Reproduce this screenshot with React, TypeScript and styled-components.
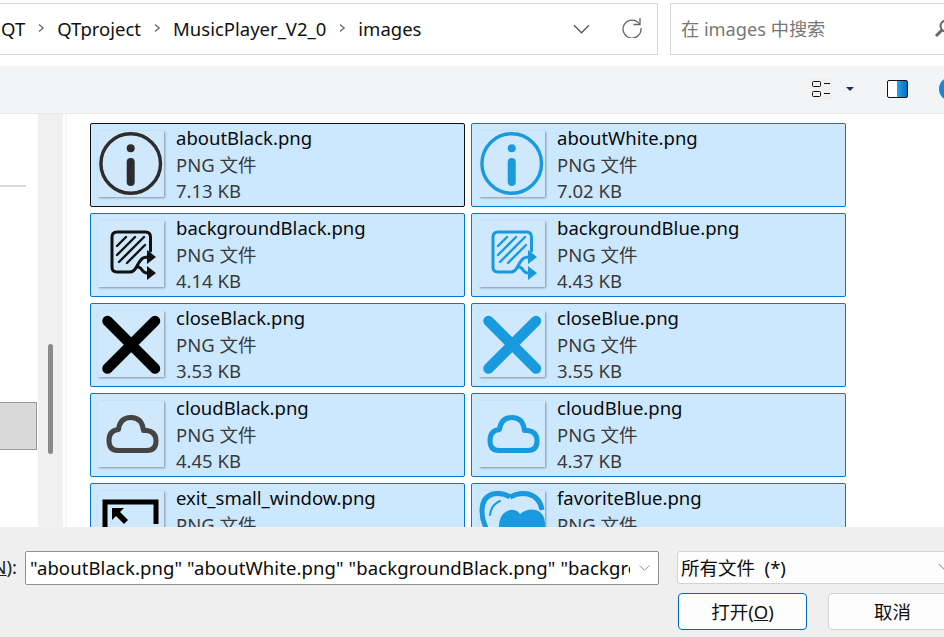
import styled, { createGlobalStyle } from "styled-components";

const Global = createGlobalStyle`
  html, body { margin: 0; padding: 0; background: #fff; overflow: hidden; }
  * { box-sizing: border-box; }
`;

const Main = styled.div`
  width: 944px;
  height: 637px;
  display: flex;
  flex-direction: column;
  overflow: hidden;
  font-family: "Noto Sans", "Noto Sans CJK SC", sans-serif;
  font-size: 18.5px;
  color: #111;
`;
const TopBar = styled.div`
  height: 66px;
  flex: none;
  display: flex;
  gap: 12px;
  padding-top: 3px;
  background: #fff;
`;
const AddressBox = styled.div`
  width: 658px;
  height: 52px;
  flex: none;
  display: flex;
  align-items: center;
  border: 1px solid #d9d9d9;
  border-left: none;
  padding: 0 15px 2px 1px;
`;
const Crumb = styled.span`
  color: #111;
  white-space: nowrap;
`;
const CrumbSep = styled.svg`
  width: 32px;
  height: 12px;
  flex: none;
`;
const AddressTools = styled.div`
  margin-left: auto;
  display: flex;
  align-items: center;
  gap: 32px;
`;
const SearchBox = styled.div`
  width: 300px;
  height: 52px;
  flex: none;
  display: flex;
  align-items: center;
  padding: 0 0 2px 10px;
  border: 1px solid #d9d9d9;
  font-size: 18.2px;
  color: #777;
  white-space: nowrap;
`;
const SearchGlyph = styled.svg`
  width: 20px;
  height: 20px;
  margin-left: 109px;
  flex: none;
`;
const Toolbar = styled.div`
  height: 48px;
  flex: none;
  display: flex;
  align-items: center;
  justify-content: flex-end;
  background: #f3f4f6;
  border-bottom: 1px solid #eaeaea;
  padding-bottom: 1px;
`;
const ViewButton = styled.div`
  width: 22px;
  height: 22px;
  display: flex;
  align-items: center;
  justify-content: center;
  background: #f0f0f0;
`;
const Caret = styled.div`
  width: 0;
  height: 0;
  margin-left: 14px;
  border-left: 4px solid transparent;
  border-right: 4px solid transparent;
  border-top: 4px solid #1d2f55;
`;
const PaneIcon = styled.div`
  width: 21px;
  height: 18px;
  margin-left: 33px;
  border: 1px solid #111;
  border-radius: 2px;
  background: linear-gradient(90deg, #fff 0 50%, #29a0ea 50%, #0a6cc4 100%);
`;
const HelpDot = styled.div`
  width: 24px;
  height: 24px;
  flex: none;
  margin-left: 31px;
  margin-right: -19px;
  border-radius: 50%;
  background: #1a86d8;
`;
const Body = styled.div`
  flex: 1;
  min-height: 0;
  display: flex;
  overflow: hidden;
`;
const NavPane = styled.div`
  width: 38px;
  flex: none;
  background: #fff;
  padding-top: 71px;
`;
const NavRule = styled.div`
  width: 26px;
  height: 2px;
  background: #dadada;
`;
const NavSelected = styled.div`
  width: 37px;
  height: 48px;
  margin-top: 215px;
  background: #d9d9d9;
  border: 1px solid #999;
  border-left: none;
`;
const ScrollTrack = styled.div`
  width: 25px;
  flex: none;
  background: #f0f0f0;
  padding: 230px 0 0 10px;
`;
const ScrollThumb = styled.div`
  width: 5px;
  height: 110px;
  border-radius: 3px;
  background: #8a8a8a;
`;
const Edge = styled.div`
  width: 2px;
  flex: none;
  margin-left: 2px;
  background: #f7f7f7;
`;
const Files = styled.div`
  flex: 1;
  display: grid;
  grid-template-columns: 375px 375px;
  grid-auto-rows: 84px;
  gap: 6px;
  align-content: start;
  padding: 9px 0 0 23px;
  background: #fff;
`;
const Card = styled.div<{ $focused?: boolean }>`
  display: flex;
  background: #cce8ff;
  border: 1px solid ${(p) => (p.$focused ? "#111" : "#0078d4")};
  border-radius: 2px;
  padding: 7px 0 0 7px;
`;
const Thumb = styled.div`
  width: 66px;
  height: 66px;
  flex: none;
  background: #cfe8fc;
  box-shadow: 1px 1px 2px rgba(70, 80, 90, 0.55);
`;
const ThumbArt = styled.svg`
  display: block;
  width: 66px;
  height: 66px;
`;
const CardText = styled.div`
  margin-left: 12px;
  margin-top: -6px;
  line-height: 26px;
  white-space: nowrap;
`;
const FileName = styled.div`
  margin-bottom: 1px;
  color: #0a0a0a;
`;
const FileMeta = styled.div`
  color: #3a3a3a;
`;
const Footer = styled.div`
  height: 110px;
  flex: none;
  background: #efefef;
  padding-top: 24px;
`;
const FormRow = styled.div`
  display: flex;
  align-items: flex-start;
`;
const NameLabel = styled.div`
  width: 25px;
  height: 33px;
  flex: none;
  display: flex;
  justify-content: flex-end;
  align-items: center;
  overflow: hidden;
  padding: 0 8px 2px 0;
  white-space: nowrap;
  color: #222;
`;
const Under = styled.span`
  text-decoration: underline;
`;
const NameInput = styled.div`
  width: 634px;
  height: 34px;
  flex: none;
  display: flex;
  align-items: center;
  background: #fff;
  border: 1px solid #8f8f8f;
  border-radius: 2px;
  padding: 0 8px 2px 4px;
`;
const InputText = styled.div`
  flex: 1;
  min-width: 0;
  margin-right: 9px;
  overflow: hidden;
  white-space: nowrap;
  letter-spacing: 0.1px;
  color: #0a0a0a;
`;
const TypeSelect = styled.div`
  width: 278px;
  height: 33px;
  flex: none;
  display: flex;
  align-items: center;
  justify-content: space-between;
  margin-left: 18px;
  padding: 0 3px 2px 3px;
  background: #fdfdfd;
  border: 1px solid #d3d3d3;
  border-radius: 3px 0 0 3px;
  white-space: nowrap;
  color: #0a0a0a;
`;
const Actions = styled.div`
  display: flex;
  gap: 21px;
  margin-top: 8px;
  margin-left: 678px;
`;
const DialogButton = styled.button<{ $primary?: boolean }>`
  width: 129px;
  height: 37px;
  flex: none;
  padding: 0 0 2px;
  font: inherit;
  color: #111;
  background: #fdfdfd;
  border: 1px solid ${(p) => (p.$primary ? "#0067c0" : "#d3d3d3")};
  border-radius: 4px;
`;

const Chevron = ({ size, color }: { size: number; color: string }) => (
  <svg width={size} height={size} viewBox="0 0 16 16" fill="none">
    <path d="M1 5l7 7 7-7" stroke={color} strokeWidth="1.2" />
  </svg>
);

const Sep = () => (
  <CrumbSep viewBox="0 0 32 12">
    <path d="M14 2.5l4 3.5-4 3.5" fill="none" stroke="#777" strokeWidth="1.6" />
  </CrumbSep>
);

const BLUE = "#1a9ade";

const AboutArt = ({ color }: { color: string }) => (
  <ThumbArt viewBox="0 0 66 66">
    <circle cx="32.7" cy="32.5" r="29.8" fill="none" stroke={color} strokeWidth="3.4" />
    <circle cx="32.7" cy="17.3" r="4" fill={color} />
    <path d="M32.7 31v20" stroke={color} strokeWidth="8" strokeLinecap="round" />
  </ThumbArt>
);

const BackgroundArt = ({ color }: { color: string }) => (
  <ThumbArt viewBox="0 0 66 66">
    <g fill="none" stroke={color} strokeWidth="3" strokeLinecap="round" strokeLinejoin="round">
      <path d="M52.5 30V16q0-5-5-5H19q-5 0-5 5v30q0 5 5 5h13q4 0 7-6t6-8q2-1 8-1" />
      <path d="M40 46q2 0 4 3t5 3h6" />
      <path d="M19 25l9-9M19 34l18-18M21 41l25-25M29 42l18-18" strokeWidth="2.4" />
    </g>
    <path d="M49 29l9 7-9 7zM49 45l9 7-9 7z" fill={color} />
  </ThumbArt>
);

const CloseArt = ({ color }: { color: string }) => (
  <ThumbArt viewBox="0 0 66 66">
    <path d="M9.5 10l47.5 47.5M57 10L9.5 57.5" stroke={color} strokeWidth="10.5" strokeLinecap="round" />
  </ThumbArt>
);

const CloudArt = ({ color }: { color: string }) => (
  <ThumbArt viewBox="0 0 66 66">
    <path
      d="M20 49.5h29q9 0 9-9.5t-9.500-10.500h-3Q44 16.500 33 16.500 22 16.500 20.500 28.500 11 29.500 11 39.500T20 49.500z"
      fill="none"
      stroke={color}
      strokeWidth="5"
      strokeLinejoin="round"
    />
  </ThumbArt>
);

const ExitArt = () => (
  <ThumbArt viewBox="0 0 66 66">
    <path d="M7 42V11h51v22" fill="none" stroke="#000" strokeWidth="5" />
    <path d="M14 17h12l-4 4 8 8-4 4-8-8-4 4z" fill="#000" />
    <path d="M7 42v10M36 40h22" fill="none" stroke="#777" strokeWidth="3" />
  </ThumbArt>
);

const FavoriteArt = () => (
  <ThumbArt viewBox="0 0 66 66">
    <path
      d="M31 6Q23 1 14 3 3 6 3 20q0 12 8 24M31 6q9-5 18-3 12 3 14 16"
      fill="none"
      stroke={BLUE}
      strokeWidth="5"
    />
    <path d="M21 10q-9 4-10 14" fill="none" stroke={BLUE} strokeWidth="2" strokeLinecap="round" />
    <path d="M41 23q7-6 16-4 9 3 9 14v33H20V36q0-14 11-17 6-1 10 4z" fill={BLUE} />
  </ThumbArt>
);

const files = [
  { name: "aboutBlack.png", size: "7.13 KB", art: <AboutArt color="#2c2c2c" />, focused: true },
  { name: "aboutWhite.png", size: "7.02 KB", art: <AboutArt color={BLUE} /> },
  { name: "backgroundBlack.png", size: "4.14 KB", art: <BackgroundArt color="#111" /> },
  { name: "backgroundBlue.png", size: "4.43 KB", art: <BackgroundArt color={BLUE} /> },
  { name: "closeBlack.png", size: "3.53 KB", art: <CloseArt color="#000" /> },
  { name: "closeBlue.png", size: "3.55 KB", art: <CloseArt color={BLUE} /> },
  { name: "cloudBlack.png", size: "4.45 KB", art: <CloudArt color="#444" /> },
  { name: "cloudBlue.png", size: "4.37 KB", art: <CloudArt color={BLUE} /> },
  { name: "exit_small_window.png", size: "4.02 KB", art: <ExitArt /> },
  { name: "favoriteBlue.png", size: "6.21 KB", art: <FavoriteArt /> },
];

const App = () => {
  return (
    <Main>
      <Global />
      <TopBar>
        <AddressBox>
          <Crumb>QT</Crumb>
          <Sep />
          <Crumb>QTproject</Crumb>
          <Sep />
          <Crumb>MusicPlayer_V2_0</Crumb>
          <Sep />
          <Crumb>images</Crumb>
          <AddressTools>
            <Chevron size={17} color="#555" />
            <svg width="20" height="20" viewBox="0 0 20 20" fill="none">
              <path d="M17.500 6A9 9 0 1 0 19 10" stroke="#666" strokeWidth="1.3" />
              <path d="M18 0v6.500h-6.500" stroke="#666" strokeWidth="1.3" />
            </svg>
          </AddressTools>
        </AddressBox>
        <SearchBox>
          在 images 中搜索
          <SearchGlyph viewBox="0 0 20 20">
            <circle cx="12" cy="8" r="5.500" fill="none" stroke="#666" strokeWidth="2" />
            <path d="M8 12l-6 6" stroke="#666" strokeWidth="3" />
          </SearchGlyph>
        </SearchBox>
      </TopBar>
      <Toolbar>
        <ViewButton>
          <svg width="20" height="18" viewBox="0 0 20 18" fill="none">
            <rect x="1.500" y="1.500" width="8" height="5" rx="1" stroke="#111" />
            <rect x="1.500" y="11.500" width="8" height="5" rx="1" stroke="#111" />
            <path d="M13 3.500h6M13 13.500h6" stroke="#111" />
          </svg>
        </ViewButton>
        <Caret />
        <PaneIcon />
        <HelpDot />
      </Toolbar>
      <Body>
        <NavPane>
          <NavRule />
          <NavSelected />
        </NavPane>
        <ScrollTrack>
          <ScrollThumb />
        </ScrollTrack>
        <Edge />
        <Files>
          {files.map((f) => (
            <Card key={f.name} $focused={f.focused}>
              <Thumb>{f.art}</Thumb>
              <CardText>
                <FileName>{f.name}</FileName>
                <FileMeta>PNG 文件</FileMeta>
                <FileMeta>{f.size}</FileMeta>
              </CardText>
            </Card>
          ))}
        </Files>
      </Body>
      <Footer>
        <FormRow>
          <NameLabel>
            文件名(<Under>N</Under>):
          </NameLabel>
          <NameInput>
            <InputText>"aboutBlack.png" "aboutWhite.png" "backgroundBlack.png" "backgroundBlue.png"</InputText>
            <Chevron size={11} color="#777" />
          </NameInput>
          <TypeSelect>
            所有文件&nbsp;&nbsp;(*)
            <Chevron size={13} color="#777" />
          </TypeSelect>
        </FormRow>
        <Actions>
          <DialogButton $primary>
            打开(<Under>O</Under>)
          </DialogButton>
          <DialogButton>取消</DialogButton>
        </Actions>
      </Footer>
    </Main>
  );
};

export default App;
